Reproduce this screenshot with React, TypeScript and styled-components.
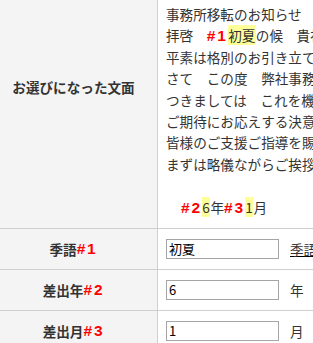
import React from "react";
import styled, { createGlobalStyle } from "styled-components";

const Global = createGlobalStyle`
  html, body {
    margin: 0;
    padding: 0;
    background: #ffffff;
    overflow: hidden;
  }
  body {
    font-family: "Noto Sans CJK JP", "Noto Sans", sans-serif;
    color: #333333;
  }
`;

const Form = styled.div`
  display: grid;
  grid-template-columns: 158px 520px;
  width: 678px;
`;

const Label = styled.div<{ $tall?: boolean }>`
  display: flex;
  align-items: center;
  justify-content: center;
  background: #f4f4f4;
  border-right: 1px solid #cfcfcf;
  border-bottom: 1px solid #cfcfcf;
  padding: 0 10px ${(p) => (p.$tall ? "54px" : "0")} 0;
  font-size: 13.6px;
  font-weight: bold;
  color: #333333;
  white-space: nowrap;
`;

const Value = styled.div<{ $letter?: boolean }>`
  border-bottom: 1px solid #cfcfcf;
  padding: ${(p) => (p.$letter ? "4px 8px 10px" : "10px 8px 10px")};
  display: flex;
  flex-direction: ${(p) => (p.$letter ? "column" : "row")};
  align-items: ${(p) => (p.$letter ? "stretch" : "center")};
  gap: ${(p) => (p.$letter ? "0" : "11px")};
`;

const Line = styled.div<{ $indent?: boolean }>`
  height: 21.4px;
  line-height: 21.4px;
  font-size: 13.6px;
  color: #333333;
  white-space: nowrap;
  padding-left: ${(p) => (p.$indent ? "15px" : "0")};
`;

const Tag = styled.span`
  font-family: "Liberation Sans", Arial, sans-serif;
  font-weight: bold;
  font-size: 15.5px;
  letter-spacing: 1.8px;
  color: #ff0000;
`;

const Mark = styled.span`
  background: #ffff99;
  padding: 0 0.5px;
`;

const Input = styled.input`
  box-sizing: border-box;
  width: 113px;
  height: 20px;
  margin: 0;
  padding: 0 2px;
  border: 1px solid #a5a5a5;
  font-family: "Noto Sans CJK JP", sans-serif;
  font-size: 13px;
  color: #000000;
  background: #ffffff;
  outline: none;
`;

const Unit = styled.span`
  font-size: 13.6px;
  color: #333333;
  white-space: nowrap;
`;

const Link = styled.a`
  font-size: 13.6px;
  color: #333333;
  text-decoration: underline;
  text-decoration-color: #000000;
  white-space: nowrap;
  cursor: pointer;
`;

export default function App() {
  return (
    <>
      <Global />
      <Form>
        <Label $tall>お選びになった文面</Label>
        <Value $letter>
          <Line>事務所移転のお知らせ</Line>
          <Line>
            拝啓　<Tag>#1</Tag>
            <Mark>初夏</Mark>の候　貴社ますますご清栄のこととお慶び申し上げます。
          </Line>
          <Line>平素は格別のお引き立てを賜り、厚く御礼申し上げます。</Line>
          <Line>さて　この度　弊社事務所を下記へ移転することとなりました。</Line>
          <Line>つきましては　これを機に社員一同心を新たにし</Line>
          <Line>ご期待にお応えする決意でございます。</Line>
          <Line>皆様のご支援ご指導を賜りますようお願い申し上げます。</Line>
          <Line>まずは略儀ながらご挨拶申し上げます。</Line>
          <Line />
          <Line $indent>
            <Tag>#2</Tag>
            <Mark>6</Mark>年<Tag>#3</Tag>
            <Mark>1</Mark>月
          </Line>
        </Value>

        <Label>
          季語<Tag>#1</Tag>
        </Label>
        <Value>
          <Input defaultValue="初夏" />
          <Link>季語一覧</Link>
        </Value>

        <Label>
          差出年<Tag>#2</Tag>
        </Label>
        <Value>
          <Input defaultValue="6" />
          <Unit>年</Unit>
        </Value>

        <Label>
          差出月<Tag>#3</Tag>
        </Label>
        <Value>
          <Input defaultValue="1" />
          <Unit>月</Unit>
        </Value>
      </Form>
    </>
  );
}
